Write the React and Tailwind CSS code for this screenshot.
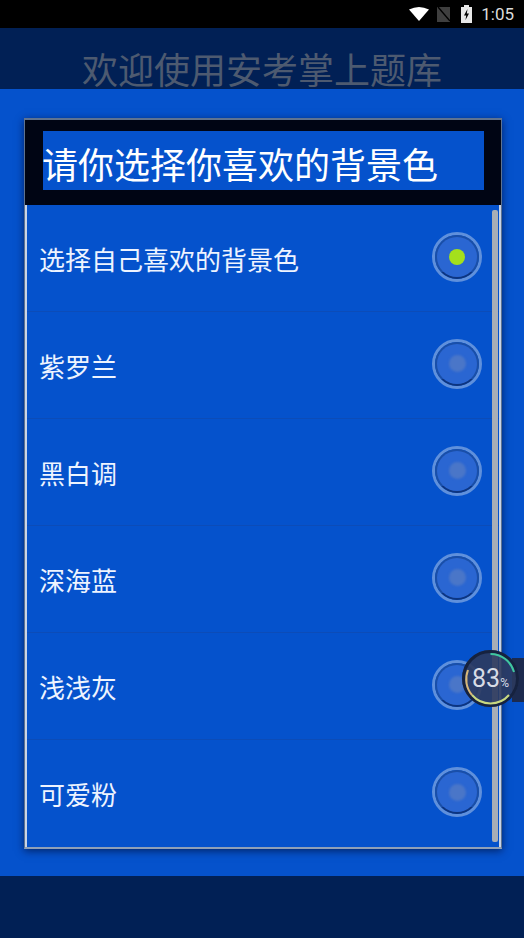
import React from 'react';

const cjk = { fontFamily: '"Noto Sans CJK SC", sans-serif' };

const OPTIONS = ['选择自己喜欢的背景色', '紫罗兰', '黑白调', '深海蓝', '浅浅灰', '可爱粉'];

const StatusBar = () => (
  <div className="h-[28px] bg-black flex items-center justify-end pr-[10px]">
    <svg width="20" height="14" viewBox="0 0 20 14" className="mr-[8px]">
      <path d="M0 2.5 Q10 -2.5 20 2.5 L10 14 Z" fill="#fff" />
    </svg>
    <svg width="13" height="15" viewBox="0 0 13 15" className="mr-[11px]">
      <path d="M0 0 H13 V15 H0 Z" fill="#3f3f3f" />
      <path d="M1 0 L13 14" stroke="#000" strokeWidth="1.4" />
    </svg>
    <svg width="11" height="18" viewBox="0 0 11 18" className="mr-[9px]">
      <path d="M3 0 H8 V2 H11 V18 H0 V2 H3 Z" fill="#e8e8e8" />
      <path d="M6.5 4 L3 10.5 H5.2 L4.5 15 L8 8.5 H5.8 Z" fill="#000" />
    </svg>
    <span className="text-[17px] leading-none text-[#dcdcdc]" style={{ fontFamily: 'Roboto, sans-serif' }}>1:05</span>
  </div>
);

const Radio = ({ checked }) => (
  <div className="w-[50px] h-[50px] rounded-full border-[3px] border-[#5f90dc] flex items-center justify-center shrink-0 mt-[-3px]">
    <div className="w-[44px] h-[44px] rounded-full border-2 border-[#1a4fa8] border-b-[#0d3580] bg-[#2a66d2] flex items-center justify-center">
      {checked
        ? <div className="w-[16px] h-[16px] rounded-full bg-[#a4e01c] blur-[0.5px]" />
        : <div className="w-[17px] h-[17px] rounded-full bg-[#4a76c8] blur-[1px]" />}
    </div>
  </div>
);

const Option = ({ label, checked, last }) => (
  <div className={`h-[107px] pl-[12px] pr-[17px] flex items-center justify-between ${last ? '' : 'border-b border-[#0c4cb8]'}`}>
    <span className="text-[26px] leading-none text-[#eef4ff] mt-[1px]" style={cjk}>{label}</span>
    <Radio checked={checked} />
  </div>
);

const BatteryBubble = () => (
  <div className="absolute left-[462px] top-[650px] w-[62px] h-[58px] pointer-events-none">
    <div className="absolute left-[50px] top-[8px] w-[12px] h-[44px] bg-[#1c2a4e]" />
    <div className="absolute left-0 top-0 w-[57px] h-[57px] rounded-full bg-[#2c3a5e]/90 flex items-center justify-center">
      <svg width="57" height="57" viewBox="0 0 57 57" className="absolute inset-0">
        <circle cx="28.5" cy="28.5" r="27" fill="none" stroke="#16223f" strokeWidth="3" />
        <path d="M28.5 4 A24.5 24.5 0 0 1 52 22" fill="none" stroke="#3fc7a0" strokeWidth="2" />
        <path d="M10 45 A24.5 24.5 0 0 0 47 45" fill="none" stroke="#c8d880" strokeWidth="2" />
        <path d="M10 45 A24.5 24.5 0 0 1 6 20" fill="none" stroke="#d8b878" strokeWidth="2" />
      </svg>
      <span className="relative text-[#d8dce6] text-[25px] leading-none" style={{ fontFamily: 'Roboto, sans-serif' }}>
        83<span className="text-[12px]">%</span>
      </span>
    </div>
  </div>
);

export default function App() {
  return (
    <div className="relative w-[524px] h-[938px] overflow-hidden bg-[#0552cc] flex flex-col">
      <StatusBar />
      <div className="h-[61px] shrink-0 bg-[#012055] flex items-center justify-center">
        <h1 className="text-[36px] leading-none mt-[18px] text-[#4d5a70] font-normal" style={cjk}>欢迎使用安考掌上题库</h1>
      </div>

      <div className="flex-1 px-[24px] pt-[29px]">
        <div className="relative w-[478px] h-[731px] border border-t-2 border-[#5f7390] border-b-2 border-b-[#8fa0b8] shadow-[0_2px_8px_rgba(0,20,70,0.75)] flex flex-col">
          <div className="h-[85px] shrink-0 bg-[#000514] pl-[18px] pt-[11px]">
            <div className="w-[441px] h-[59px] bg-[#0552cc] flex items-center">
              <span className="text-[36px] leading-none text-white ml-[-1px] mt-[4px]" style={cjk}>请你选择你喜欢的背景色</span>
            </div>
          </div>
          <div className="flex-1 border-l-2 border-r-2 border-[#c9d4e6] bg-[#0552cc]">
            {OPTIONS.map((label, i) => (
              <Option key={label} label={label} checked={i === 0} last={i === OPTIONS.length - 1} />
            ))}
          </div>
          <div className="absolute left-[467px] top-[90px] w-[6px] h-[632px] rounded-[2px] bg-[#a9aeb6]" />
        </div>
      </div>

      <div className="h-[62px] shrink-0 bg-[#012055]" />
      <BatteryBubble />
    </div>
  );
}
